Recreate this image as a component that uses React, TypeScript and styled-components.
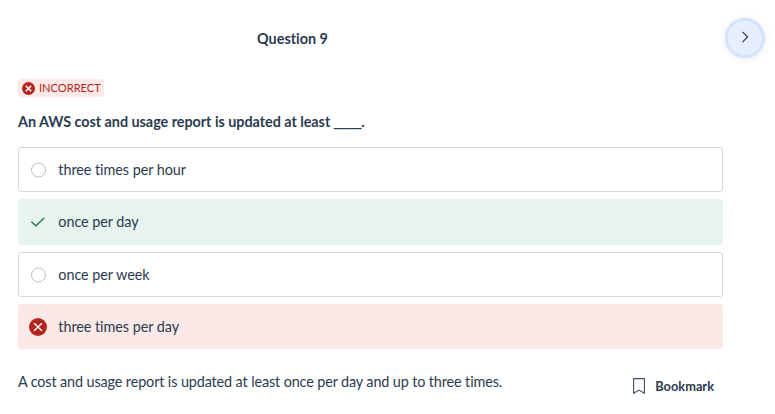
import React from "react";
import styled, { createGlobalStyle } from "styled-components";

const Global = createGlobalStyle`
  * { box-sizing: border-box; }
  body {
    margin: 0;
    background: #fff;
    color: #2b3b50;
    font-family: Lato, sans-serif;
    font-size: 14px;
    line-height: 20px;
    font-variant-ligatures: none;
  }
`;

const Page = styled.main`
  width: 775px;
  height: 414px;
  overflow: hidden;
  padding-left: 18px;
`;

const Header = styled.header`
  display: flex;
  align-items: center;
  height: 79px;
  padding: 0 10px 4px 0;
`;

const Title = styled.h1`
  width: 549px;
  margin: 0;
  padding-top: 2px;
  text-align: center;
  font-size: 14.4px;
  font-weight: 700;
`;

const NextButton = styled.button`
  display: flex;
  align-items: center;
  justify-content: center;
  width: 40px;
  height: 40px;
  margin-left: auto;
  padding: 0 0 1px;
  border: 3px solid #d3e3fd;
  border-radius: 50%;
  background: #e6effe;
  box-shadow: 0 1px 8px rgba(0, 0, 0, 0.08);
`;

const Content = styled.section`
  width: 705px;
`;

const Status = styled.div`
  display: flex;
  align-items: center;
  gap: 4px;
  width: 86px;
  height: 18px;
  padding-left: 4px;
  border-radius: 3px;
  background: #fce8e6;
  color: #b3261e;
  font-size: 11.1px;
`;

const Question = styled.h2`
  margin: 15px 0 15px;
  font-size: 14.4px;
  line-height: 20px;
  font-weight: 700;
  letter-spacing: -0.04px;
`;

const Blank = styled.span`
  letter-spacing: -1.2px;
  margin-left: -0.5px;
  margin-right: 0.5px;
`;

const Options = styled.div`
  display: grid;
  grid-template-rows: 45px 46px 45px 45px;
  row-gap: 7px;
`;

type State = "idle" | "correct" | "wrong";
const fills = { idle: "#fff", correct: "#e6f4ed", wrong: "#fbe9e7" };

const Option = styled.div<{ $state: State }>`
  display: flex;
  align-items: center;
  gap: 10.3px;
  padding-left: 9px;
  border: 1px solid ${(p) => (p.$state === "idle" ? "#d8d9de" : fills[p.$state])};
  border-radius: 3px;
  background: ${(p) => fills[p.$state]};
  font-size: 14.4px;
  letter-spacing: -0.05px;
`;

const Marker = styled.span`
  display: flex;
  align-items: center;
  justify-content: center;
  width: 20px;
  height: 20px;
`;

const Footer = styled.footer`
  display: flex;
  justify-content: space-between;
  margin-top: 22px;
  padding-right: 9px;
`;

const Explanation = styled.p`
  margin: 0;
  padding-top: 1px;
  font-size: 14.4px;
  letter-spacing: -0.12px;
`;

const Bookmark = styled.button`
  display: flex;
  align-items: center;
  gap: 10px;
  height: 20px;
  margin-top: 5px;
  padding: 0;
  border: 0;
  background: none;
  color: inherit;
  font: 700 12.8px/20px Lato, sans-serif;
`;

const Cross = ({ size, weight }: { size: number; weight: number }) => (
  <svg width={size} height={size} viewBox="0 0 18 18" fill="none">
    <circle cx="9" cy="9" r="9" fill="#b3261e" />
    <path d="M5.2 5.2l7.6 7.6M12.8 5.2l-7.6 7.6" stroke="#fff" strokeWidth={weight} />
  </svg>
);

const Mark = ({ state }: { state: State }) => {
  if (state === "wrong") return <Cross size={18} weight={1.4} />;
  if (state === "correct")
    return (
      <svg width="16" height="12" viewBox="0 0 16 12" fill="none">
        <path d="M1.3 5.8l4.6 4L14.3 1.7" stroke="#197b4b" strokeWidth="1.3" />
      </svg>
    );
  return (
    <svg width="16" height="16" viewBox="0 0 16 16" fill="none">
      <circle cx="8.5" cy="8" r="7" stroke="#b9bec8" />
    </svg>
  );
};

const answers: { text: string; state: State }[] = [
  { text: "three times per hour", state: "idle" },
  { text: "once per day", state: "correct" },
  { text: "once per week", state: "idle" },
  { text: "three times per day", state: "wrong" },
];

export default function App() {
  return (
    <Page>
      <Global />
      <Header>
        <Title>Question 9</Title>
        <NextButton aria-label="Next question">
          <svg width="8" height="12" viewBox="0 0 8 12" fill="none">
            <path d="M1.5 .8l5.1 5.2-5.1 5.2" stroke="#2b3b50" strokeWidth="1.2" />
          </svg>
        </NextButton>
      </Header>
      <Content>
        <Status><Cross size={13} weight={2.1} />INCORRECT</Status>
        <Question>An AWS cost and usage report is updated at least <Blank>_____</Blank>.</Question>
        <Options>
          {answers.map((a) => (
            <Option key={a.text} $state={a.state}>
              <Marker><Mark state={a.state} /></Marker>
              {a.text}
            </Option>
          ))}
        </Options>
        <Footer>
          <Explanation>A cost and usage report is updated at least once per day and up to three times.</Explanation>
          <Bookmark>
            <svg width="12" height="16" viewBox="0 0 12 16" fill="none">
              <path d="M.6.6h10.8v14.7L6 12.1.6 15.3z" stroke="#3f4d60" strokeWidth="1.1" />
            </svg>
            Bookmark
          </Bookmark>
        </Footer>
      </Content>
    </Page>
  );
}
